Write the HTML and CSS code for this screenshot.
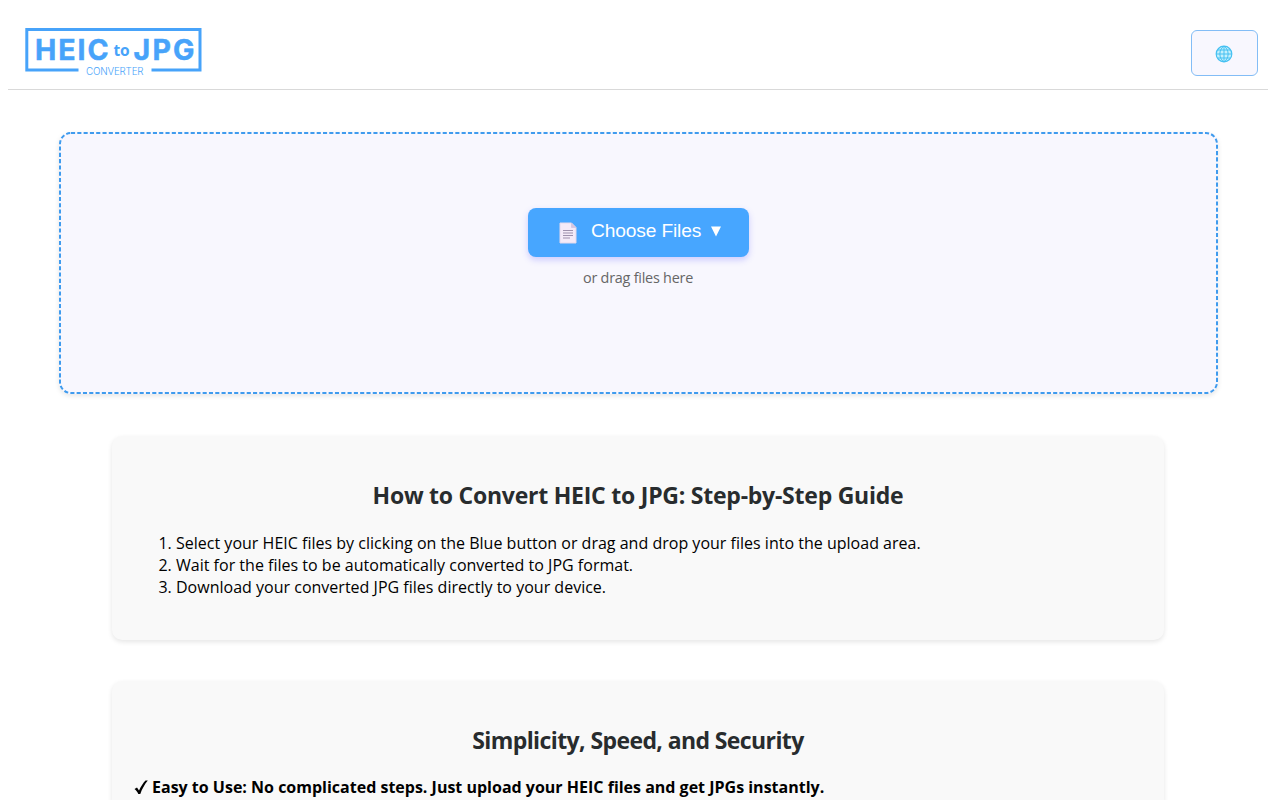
FILE: index.html
```html
<!DOCTYPE html>
<html lang="en">
<head>
    <meta charset="UTF-8">
    <meta name="viewport" content="width=device-width, initial-scale=1.0">
    <title>HEIC to JPG Converter</title>
    <link rel="stylesheet" href="styles.css">
</head>
<body>
    <header class="header">
        <a href="#" class="logo">
            <svg width="178" height="50" viewBox="0 0 178 50">
                <path d="M53.500 42H1.800V1.500H175V42H126.500" fill="none" stroke="#47a3fa" stroke-width="3"/>
                <text class="logo-main" x="10" y="32" textLength="73.500">HEIC</text>
                <text class="logo-to" x="88.500" y="28" textLength="16">to</text>
                <text class="logo-main" x="108.500" y="32" textLength="61">JPG</text>
                <text class="logo-sub" x="61" y="46.800" textLength="57.500">CONVERTER</text>
            </svg>
        </a>
        <button type="button" class="language-btn" aria-label="Language">
            <svg width="18" height="18" viewBox="0 0 18 18">
                <circle cx="9" cy="9" r="7.800" fill="#c4f0fc" stroke="#45c0f2" stroke-width="1.2"/>
                <path d="M9 1V17M1 9H17M2.500 5H15.500M2.500 13H15.500M9 1C3.500 5 3.500 13 9 17M9 1C14.500 5 14.500 13 9 17" fill="none" stroke="#45c0f2" stroke-width="1"/>
            </svg>
        </button>
    </header>

    <main>
        <!-- Upload area -->
        <div class="drop-zone">
            <svg class="drop-border" width="1159" height="262">
                <rect x="1" y="1" width="1157" height="260" rx="11" fill="none" stroke="#3f9bee" stroke-width="2" stroke-dasharray="4.100 2.200"/>
            </svg>
            <button type="button" class="choose-btn">
                <svg class="file-icon" width="18" height="22" viewBox="0 0 18 22">
                    <path d="M1 1H12.500L17 5.500V21H1Z" fill="#f4eaf8" stroke="#e2d8ec" stroke-width="1"/>
                    <path d="M12.500 1V5.500H17" fill="#d5c5df" stroke="#d5c9e4" stroke-width="1"/>
                    <path d="M4 8.500H14M4 11H14M4 13.500H14M4 16H11" fill="none" stroke="#9f91ad" stroke-width="1"/>
                </svg>
                <span class="choose-text">Choose Files</span>
                <svg class="arrow" width="10" height="11" viewBox="0 0 10 11">
                    <path d="M0 0.500H10L5 10.500Z" fill="#fff"/>
                </svg>
            </button>
            <p class="drag-text">or drag files here</p>
        </div>

        <!-- Guide -->
        <section class="info-box">
            <h2 class="guide-title">How to Convert HEIC to JPG: Step-by-Step Guide</h2>
            <ol class="steps">
                <li>Select your HEIC files by clicking on the Blue button or drag and drop your files into the upload area.</li>
                <li>Wait for the files to be automatically converted to JPG format.</li>
                <li>Download your converted JPG files directly to your device.</li>
            </ol>
        </section>

        <!-- Features -->
        <section class="info-box">
            <h2 class="features-title">Simplicity, Speed, and Security</h2>
            <p class="feature">
                <svg class="check" width="14" height="15" viewBox="0 0 14 15">
                    <path d="M0.500 9L3 7.500L5 10.500C7 6.500 9 3 11.500 0.500H13.800C10.500 4.500 8 9 6.300 14H4.300C3.500 12 2 10 0.500 9Z" fill="#000"/>
                </svg>
                <span>Easy to Use: No complicated steps. Just upload your HEIC files and get JPGs instantly.</span>
            </p>
        </section>
    </main>
</body>
</html>
```
FILE: styles.css
```css
body {
    font-family: "Open Sans", "Noto Sans", sans-serif;
    margin: 0 12px 0 8px;
    background-color: #fff;
    color: #000;
    height: 800px;
    overflow: hidden;
}
.header {
    display: flex;
    justify-content: space-between;
    align-items: flex-start;
    height: 90px;
    padding: 28px 10px 0 17px;
    border-bottom: 1px solid #d9d9d9;
    box-sizing: border-box;
}
.logo svg {
    display: block;
}
.logo text {
    fill: #47a3fa;
}
.logo-main {
    font-family: Inter, sans-serif;
    font-size: 28.5px;
    font-weight: 700;
    stroke: #47a3fa;
    stroke-width: 0.5px;
}
.logo-to {
    font-size: 15.5px;
    font-weight: 700;
}
.logo-sub {
    font-family: Inter, sans-serif;
    font-size: 9.8px;
    font-weight: 300;
}
.language-btn {
    display: flex;
    align-items: center;
    justify-content: center;
    width: 67px;
    height: 46px;
    margin-top: 2px;
    padding: 2px 2px 0 0;
    background-color: #f8f7fe;
    border: 1px solid #83bdf6;
    border-radius: 6px;
    cursor: pointer;
}
.drop-zone {
    position: relative;
    display: flex;
    flex-direction: column;
    align-items: center;
    height: 262px;
    margin: 42px 50.5px 0;
    padding-top: 75.5px;
    background-color: #f8f7fe;
    border-radius: 12px;
    box-shadow: 0 2px 5px rgba(0, 0, 0, 0.1);
    box-sizing: border-box;
}
.drop-border {
    position: absolute;
    top: 0;
    left: 0;
}
.choose-btn {
    display: flex;
    align-items: center;
    width: 221px;
    height: 49px;
    padding: 0 0 0 31.5px;
    background-color: #47a6ff;
    color: #fff;
    border: none;
    border-radius: 8px;
    box-shadow: 0 3px 6px rgba(80, 80, 255, 0.25);
    font-family: "Liberation Sans", Arial, sans-serif;
    font-size: 19.2px;
    letter-spacing: -0.15px;
    cursor: pointer;
}
.file-icon {
    margin-top: 2px;
}
.choose-text {
    margin: 0 10px 2px 14px;
}
.arrow {
    margin-bottom: 2px;
}
.drag-text {
    margin: 10.5px 0 0;
    color: #666;
    font-size: 14.4px;
    letter-spacing: -0.23px;
    line-height: 22px;
}
.info-box {
    width: 1052px;
    height: 204px;
    margin: 42px auto 0;
    padding: 43px 22px 0;
    background-color: #f9f9f9;
    border-radius: 10px;
    box-shadow: 0 2px 5px rgba(0, 0, 0, 0.1);
    box-sizing: border-box;
}
.info-box + .info-box {
    height: 122px;
    margin-top: 41px;
    border-radius: 10px 10px 0 0;
}
.info-box h2 {
    margin: 0;
    color: #282c2e;
    font-size: 23px;
    font-weight: 700;
    line-height: 32px;
    text-align: center;
}
.info-box .guide-title {
    letter-spacing: -0.24px;
}
.info-box .features-title {
    letter-spacing: -0.6px;
}
.steps {
    margin: 21px 0 0;
    padding-left: 42px;
    font-size: 16px;
    letter-spacing: 0.01px;
    line-height: 22.2px;
}
.feature {
    display: flex;
    align-items: center;
    gap: 4px;
    margin: 20px 0 0;
    font-size: 16px;
    font-weight: 700;
    line-height: 22px;
}
```
